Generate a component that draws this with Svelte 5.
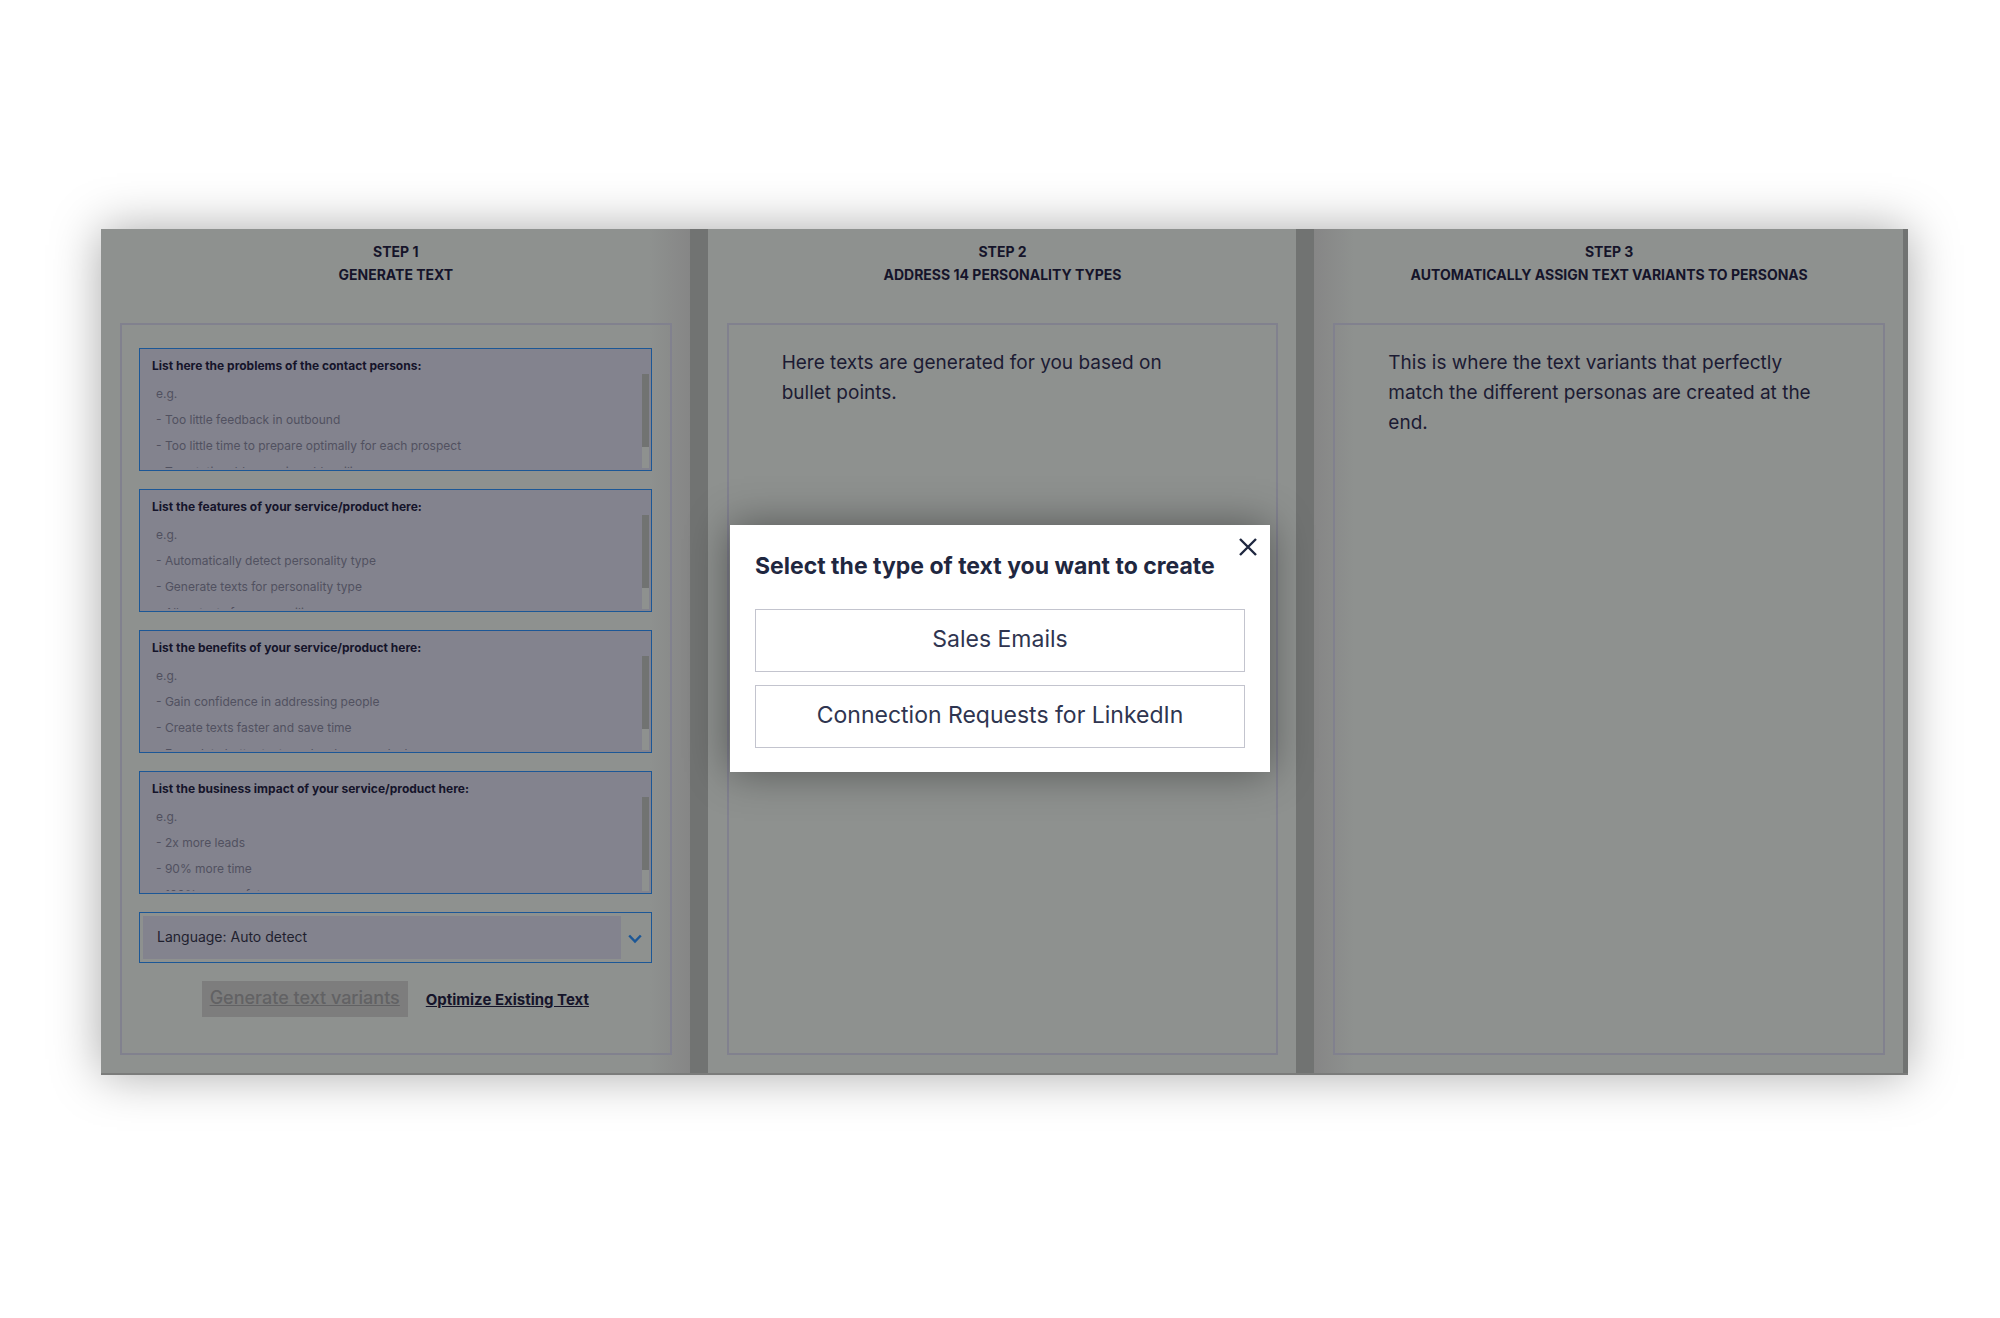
<script lang="ts">
	type Field = { id: string; label: string; hint: string };

	const fields: Field[] = [
		{
			id: 'problems',
			label: 'List here the problems of the contact persons:',
			hint: 'e.g.\n- Too little feedback in outbound\n- Too little time to prepare optimally for each prospect\n- Too static addresses in cold mailing'
		},
		{
			id: 'features',
			label: 'List the features of your service/product here:',
			hint: 'e.g.\n- Automatically detect personality type\n- Generate texts for personality type\n- Allow texts for your mailing'
		},
		{
			id: 'benefits',
			label: 'List the benefits of your service/product here:',
			hint: 'e.g.\n- Gain confidence in addressing people\n- Create texts faster and save time\n- Formulate better texts and make more deals'
		},
		{
			id: 'impact',
			label: 'List the business impact of your service/product here:',
			hint: 'e.g.\n- 2x more leads\n- 90% more time\n- 100% more safety'
		}
	];

	const textTypes = ['Sales Emails', 'Connection Requests for LinkedIn'];

	let open = $state(true);
</script>

<main class="page">
	<div class="board">
		<section class="step">
			<h2 class="step-title">STEP 1<br />GENERATE TEXT</h2>
			<form class="panel panel-form">
				{#each fields as field}
					<div class="field">
						<label for={field.id}>{field.label}</label>
						<div class="field-body">
							<textarea id={field.id} placeholder={field.hint}></textarea>
							<div class="track" aria-hidden="true"><div class="thumb"></div></div>
						</div>
					</div>
				{/each}
				<div class="language">
					<select aria-label="Language">
						<option>Language: Auto detect</option>
					</select>
					<svg class="chevron" viewBox="0 0 14 10" aria-hidden="true">
						<path d="M1.2 1.5 L7 7.5 L12.8 1.5" />
					</svg>
				</div>
				<div class="actions">
					<button type="button" class="generate" disabled>Generate text variants</button>
					<a class="optimize" href="#optimize">Optimize Existing Text</a>
				</div>
			</form>
		</section>

		<section class="step">
			<h2 class="step-title">STEP 2<br />ADDRESS 14 PERSONALITY TYPES</h2>
			<div class="panel">
				<p class="intro">Here texts are generated for you based on bullet points.</p>
			</div>
		</section>

		<section class="step">
			<h2 class="step-title">STEP 3<br />AUTOMATICALLY ASSIGN TEXT VARIANTS TO PERSONAS</h2>
			<div class="panel">
				<p class="intro">
					This is where the text variants that perfectly match the different personas are created at the
					end.
				</p>
			</div>
		</section>

		{#if open}
			<div class="overlay">
				<div class="dialog" role="dialog" aria-labelledby="dialog-title">
					<button type="button" class="close" aria-label="Close" onclick={() => (open = false)}>
						<svg viewBox="0 0 18 18" aria-hidden="true">
							<path d="M1 1 L17 17 M17 1 L1 17" />
						</svg>
					</button>
					<h1 id="dialog-title">Select the type of text you want to create</h1>
					{#each textTypes as type}
						<button type="button" class="choice">{type}</button>
					{/each}
				</div>
			</div>
		{/if}
	</div>
</main>

<style>
	:global(body) {
		background: #fff;
	}

	.page {
		box-sizing: border-box;
		min-height: 100vh;
		padding: 229px 92px 243px 101px;
		font-family: Inter, 'Liberation Sans', sans-serif;
		color: #15142a;
	}

	.page * {
		box-sizing: border-box;
	}

	.board {
		position: relative;
		display: grid;
		grid-template-columns: repeat(3, minmax(0, 1fr));
		gap: 18px;
		min-height: 846px;
		padding-right: 5px;
		border-bottom: 2px solid #7b7c7b;
		background: #717372;
		box-shadow: 0 0 46px rgba(0, 0, 0, 0.34);
	}

	.step {
		display: flex;
		flex-direction: column;
		padding: 11px 18px 18px 19px;
		background: #8e918f;
	}

	/* the outer columns darken towards the middle one */
	.step:first-child {
		background: linear-gradient(to right, #8e918f calc(100% - 40px), #868686);
	}

	.step:nth-child(3) {
		background: linear-gradient(to right, #868686, #8e918f 40px);
	}

	.step-title {
		margin: 0 0 37px;
		font-size: 14px;
		font-weight: 700;
		line-height: 23px;
		text-align: center;
	}

	.panel {
		flex: 1;
		padding: 23px 66px 23px 53px;
		border: 2px solid #81818e;
	}

	.panel-form {
		display: flex;
		flex-direction: column;
		gap: 18px;
		padding: 23px 18px 23px 17px;
	}

	.intro {
		margin: 0;
		font-size: 19px;
		line-height: 30px;
		color: #1c1b33;
	}

	.field {
		display: flex;
		flex-direction: column;
		height: 123px;
		padding: 9px 2px 2px 12px;
		border: 1px solid #1c5796;
		background: #83838e;
	}

	.field label {
		font-size: 12px;
		font-weight: 700;
		line-height: 16px;
		color: #15142a;
	}

	.field-body {
		display: flex;
		flex: 1;
		min-height: 0;
	}

	textarea {
		flex: 1;
		min-width: 0;
		padding: 7px 4px 0;
		border: 0;
		outline: 0;
		resize: none;
		overflow: hidden;
		background: transparent;
		font: 12px/26px Inter, 'Liberation Sans', sans-serif;
	}

	textarea::placeholder {
		color: #515160;
		opacity: 1;
	}

	.track {
		width: 7px;
		background: #8e918f;
	}

	.thumb {
		height: 78%;
		background: #717372;
	}

	.language {
		position: relative;
		height: 51px;
		padding: 3px;
		border: 1px solid #1c5796;
	}

	.language select {
		width: calc(100% - 27px);
		height: 100%;
		padding: 0 14px 2px;
		border: 0;
		appearance: none;
		background: #83838e;
		font: 14px Inter, 'Liberation Sans', sans-serif;
		color: #1f1f2e;
	}

	.chevron {
		position: absolute;
		top: 21px;
		right: 9px;
		width: 14px;
		height: 10px;
		fill: none;
		stroke: #1c5796;
		stroke-width: 2.5;
	}

	.actions {
		display: flex;
		align-items: center;
		justify-content: center;
		gap: 18px;
	}

	.generate {
		height: 36px;
		padding: 0 8px 3px;
		border: 0;
		background: #7d7d7d;
		font: 500 18px Inter, 'Liberation Sans', sans-serif;
		color: #626264;
		text-decoration: underline;
	}

	.optimize {
		font-size: 15px;
		font-weight: 700;
		color: #15142a;
	}

	.overlay {
		position: absolute;
		inset: 0;
		display: flex;
		align-items: center;
		justify-content: center;
		padding: 0 9px 5px 0;
	}

	.dialog {
		position: relative;
		display: flex;
		flex-direction: column;
		gap: 13px;
		width: 30%;
		min-width: 540px;
		padding: 25px 25px 24px;
		background: #fff;
		box-shadow: 0 0 40px rgba(0, 0, 0, 0.42);
	}

	.dialog h1 {
		margin: 0 0 14px;
		font-size: 23px;
		font-weight: 700;
		line-height: 32px;
		color: #1f2740;
	}

	.choice {
		height: 63px;
		padding: 0 0 4px;
		border: 1px solid #c3c4ce;
		background: #fff;
		font: 23px Inter, 'Liberation Sans', sans-serif;
		color: #2f3550;
	}

	.close {
		position: absolute;
		top: 13px;
		right: 13px;
		width: 18px;
		height: 18px;
		padding: 0;
		border: 0;
		background: none;
	}

	.close svg {
		display: block;
		fill: none;
		stroke: #1f2740;
		stroke-width: 2.4;
	}
</style>
